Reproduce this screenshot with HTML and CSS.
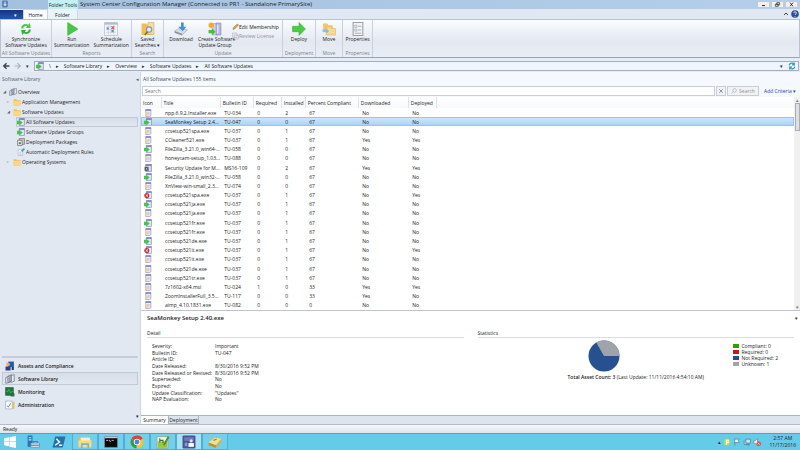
FILE: index.html
```html
<!DOCTYPE html>
<html lang="en">
<head>
    <meta charset="UTF-8">
    <meta name="viewport" content="width=device-width, initial-scale=1.0">
    <title>System Center Configuration Manager</title>
    <link rel="stylesheet" href="styles.css">
</head>
<body>
    <!-- Shared icons -->
    <svg class="sprite" aria-hidden="true">
        <symbol id="i-doc" viewBox="0 0 14 14"><path d="M3 1h9v11l-2 1H3z" fill="#f5f5ff" stroke="#7477b5"/><path d="M3 1h9v2H3z" fill="#6568a8"/><path d="M5 6h5M5 8h5M5 10h5" stroke="#a9aacc"/><rect x="2" y="6" width="5" height="5" fill="#f4cf94"/></symbol>
        <symbol id="i-green" viewBox="0 0 14 14"><path d="M4 1h9v12H4z" fill="#dfe6fa" stroke="#7477b5"/><path d="M4 1h9v2H4z" fill="#6568a8"/><path d="M0 5h4V3l6 5-6 5v-2H0z" fill="#45c44a"/></symbol>
        <symbol id="i-red" viewBox="0 0 14 14"><path d="M4 1h9v12H4z" fill="#f3f2ff" stroke="#7477b5"/><path d="M4 1h9v2H4z" fill="#6568a8"/><circle cx="5" cy="8" r="4.5" fill="#c82c38"/><path d="M3 6l4 4M7 6l-4 4" stroke="#fff" stroke-width="1.4"/></symbol>
        <symbol id="i-dark" viewBox="0 0 14 14"><path d="M3 1h10v12H3z" fill="#dddff0" stroke="#5c5f99"/><path d="M3 1h10v2H3z" fill="#6568a8"/><path d="M1 5h7v7H1z" fill="#4a4f66"/><path d="M3 7l3 3M6 7l-3 3" stroke="#fff"/></symbol>
        <symbol id="i-folder" viewBox="0 0 14 14"><path d="M1 2h5l1 2h6v9H1z" fill="#eebc54"/><path d="M1 5h12v8H1z" fill="#fbd77f"/></symbol>
        <symbol id="i-books" viewBox="0 0 14 14"><path d="M1 5l5-2v9l-5 1zM4 3l5-2v9l-5 2zM8 2l5-1v9l-5 2z" fill="#e8ebf2" stroke="#6a7080"/><path d="M3 7l3-1v5" stroke="#8b8fc1" fill="none"/></symbol>
        <symbol id="i-pkg" viewBox="0 0 14 14"><path d="M4 1h9v10H4z" fill="#ccc" stroke="#555"/><path d="M1 4h8v9H1z" fill="#eee" stroke="#444"/><circle cx="5" cy="9" r="2" fill="#557a55"/></symbol>
        <symbol id="i-rule" viewBox="0 0 14 14"><path d="M2 3h8v10H2z" fill="#fff" stroke="#9ab"/><path d="M4 7h4M4 9h4M4 11h4" stroke="#8ac"/><path d="M7 5l5-5 2 2-5 5z" fill="#3b9ad5"/></symbol>
    </svg>

    <header class="titlebar">
        <svg class="app-icon" viewBox="0 0 14 14"><rect x="2" y="1" width="10" height="12" rx="2" fill="#5b80b8"/><path d="M7 3v6M5 7l2 3 2-3" stroke="#fff" fill="none" stroke-width="1.5"/></svg>
        <span class="tools-label">Folder Tools</span>
        <h1>System Center Configuration Manager (Connected to PR1 - Standalone PrimarySite)</h1>
        <div class="window-buttons">
            <button aria-label="Minimize"><svg viewBox="0 0 12 7"><path d="M4 5h4" stroke="#222" stroke-width="1.4"/></svg></button>
            <button aria-label="Restore"><svg viewBox="0 0 12 7"><path d="M5 1h4v3H5zM3 3h4v3H3z" fill="#fff" stroke="#222"/></svg></button>
            <button aria-label="Close"><svg viewBox="0 0 12 7"><path d="M4 1l4 5M8 1L4 6" stroke="#222" stroke-width="1.3"/></svg></button>
        </div>
    </header>

    <div class="tabs">
        <button class="file-tab" aria-label="File">▾</button>
        <button class="tab active">Home</button>
        <button class="tab context">Folder</button>
        <div class="tabs-end">
            <svg viewBox="0 0 8 8"><path d="M2 5l2-2 2 2" fill="none" stroke="#444"/></svg>
            <svg viewBox="0 0 8 8"><circle cx="4" cy="4" r="3.8" fill="#2c4c9c"/><path d="M2.7 3c0-1.700 2.700-1.700 2.700 0 0 1-1.400 1-1.400 2M4 6v.8" stroke="#fff" fill="none" stroke-width=".8"/></svg>
        </div>
    </div>

    <div class="ribbon">
        <section class="group g-sync">
            <div class="tools">
                <button class="tool"><svg viewBox="0 0 26 26"><path d="M4 12C4 5 11 2 17 5l3-3 2 9-9 0 2-3c-3-2-7 0-7 4z" fill="#4cc94c"/><path d="M22 14c0 7-7 10-13 7l-3 3-2-9 9 0-2 3c3 2 7 0 7-4z" fill="#35b13a"/></svg>Synchronize<br>Software Updates</button>
            </div>
            <h2>All Software Updates</h2>
        </section>
        <section class="group g-reports">
            <div class="tools">
                <button class="tool"><svg viewBox="0 0 26 26"><path d="M5 1l19 12L5 25z" fill="#43c943" stroke="#2eaa32"/></svg>Run<br>Summarization</button>
                <button class="tool"><svg viewBox="0 0 26 26"><path d="M1 1h24v24H1z" fill="#f4f7fb" stroke="#9aa8bd"/><path d="M1 1h24v4H1z" fill="#b1bdd0"/><path d="M4 9h18M4 14h18M4 19h18M8 6v17M13 6v17M18 6v17" stroke="#b4c1d6"/><path d="M5 10h4v4H5zM14 15h4v4h-4z" fill="#5b8cd0"/><path d="M14 8l5 5m0-5l-5 5" stroke="#db5555" stroke-width="2"/></svg>Schedule<br>Summarization</button>
            </div>
            <h2>Reports</h2>
        </section>
        <section class="group g-search">
            <div class="tools">
                <button class="tool"><svg viewBox="0 0 26 26"><path d="M1 3h9l2 3h9v18H1z" fill="#f0be59"/><path d="M13 1h11v22H13z" fill="#f7dca3" stroke="#cf9e4d"/><circle cx="15" cy="14" r="5" fill="#dcecf8" stroke="#8296b1" stroke-width="2"/><path d="M12 18l-5 6" stroke="#8c6b3c" stroke-width="3"/></svg>Saved<br>Searches ▾</button>
            </div>
            <h2>Search</h2>
        </section>
        <section class="group g-update">
            <div class="tools">
                <button class="tool"><svg viewBox="0 0 26 26"><path d="M1 17l10-6 14 4-10 9z" fill="#d7dbe1" stroke="#8f97a4"/><path d="M1 17l14 5v3L1 20z" fill="#868f9b"/><path d="M13 1h5v8h5l-7 8-8-8h5z" fill="#3f91d7"/></svg>Download</button>
                <button class="tool"><svg viewBox="0 0 26 26"><path d="M9 3h9v21H9z" fill="#cfd3f3" stroke="#8d8cc5"/><path d="M15 2h9v22h-9z" fill="#b8b8e7" stroke="#7775b3"/><path d="M18 5v16" stroke="#f2f2ff" stroke-width="2"/><circle cx="6" cy="6" r="5" fill="#f6aa25"/><path d="M1 15h6v-4l7 7-7 7v-4H1z" fill="#48bd42"/></svg>Create Software<br>Update Group</button>
                <div class="small-tools">
                    <button><svg viewBox="0 0 14 14"><path d="M2 12l1-4 8-7 2 2-8 8z" fill="#e2ad4b" stroke="#745d39"/></svg>Edit Membership</button>
                    <button disabled><svg viewBox="0 0 14 14"><path d="M1 1h9v9H1zM5 5h8v8H5z" fill="#e5e8ee" stroke="#a7adb8"/></svg>Review License</button>
                </div>
            </div>
            <h2>Update</h2>
        </section>
        <section class="group g-deploy">
            <div class="tools">
                <button class="tool"><svg viewBox="0 0 26 26"><path d="M1 8h12V1l12 12-12 12v-7H1z" fill="#47cd3f" stroke="#2eab31"/></svg>Deploy</button>
            </div>
            <h2>Deployment</h2>
        </section>
        <section class="group g-move">
            <div class="tools">
                <button class="tool"><svg viewBox="0 0 26 26"><path d="M2 3h8l2 3h8v13H2z" fill="#f1c66d"/><path d="M8 9h8l2 3h7v12H8z" fill="#fbd98d" stroke="#dcae56"/><path d="M1 14h7v-3l5 6-5 5v-4H1z" fill="#8cbbe6"/></svg>Move</button>
            </div>
            <h2>Move</h2>
        </section>
        <section class="group g-props">
            <div class="tools">
                <button class="tool"><svg viewBox="0 0 26 26"><path d="M4 1h18v24H4z" fill="#f2f3f5" stroke="#9ca1aa" stroke-width="2"/><path d="M7 6h4v4H7zM7 13h4v4H7z" fill="none" stroke="#8e949f"/><path d="M13 8h6M13 15h6M7 21h12" stroke="#a7acb5" stroke-width="2"/></svg>Properties</button>
            </div>
            <h2>Properties</h2>
        </section>
    </div>

    <div class="address">
        <div class="history">
            <button aria-label="Back"><svg viewBox="0 0 14 14"><path d="M13 7H3m5-5L3 7l5 5" fill="none" stroke="#3e4654" stroke-width="2.500"/></svg></button>
            <button aria-label="Forward"><svg viewBox="0 0 14 14"><path d="M1 7h10M6 2l5 5-5 5" fill="none" stroke="#a9b1bf" stroke-width="2"/></svg></button>
            <span>▾</span>
        </div>
        <nav class="crumbs" aria-label="Breadcrumb">
            <svg><use href="#i-green"/></svg>
            <span>\</span><i>▸</i>
            <a href="#">Software Library</a><i>▸</i>
            <a href="#">Overview</a><i>▸</i>
            <a href="#">Software Updates</a><i>▸</i>
            <a href="#">All Software Updates</a>
            <span class="crumb-end">▾</span>
            <button aria-label="Refresh"><svg viewBox="0 0 14 14"><path d="M2 6c1-5 7-5 9-2V1m0 4H7M12 8c-1 5-7 5-9 2v3m0-4h4" fill="none" stroke="#2b93cf" stroke-width="2"/></svg></button>
        </nav>
    </div>

    <main class="workspace">
        <aside class="sidebar">
            <div class="side-head"><span>Software Library</span><span>◂</span></div>
            <ul class="tree">
                <li><a href="#" class="level-0"><i>◢</i><svg><use href="#i-books"/></svg>Overview</a></li>
                <li><a href="#" class="level-1"><i>▹</i><svg><use href="#i-folder"/></svg>Application Management</a></li>
                <li><a href="#" class="level-1"><i>◢</i><svg><use href="#i-folder"/></svg>Software Updates</a></li>
                <li><a href="#" class="level-2 selected"><svg><use href="#i-green"/></svg>All Software Updates</a></li>
                <li><a href="#" class="level-2"><svg><use href="#i-green"/></svg>Software Update Groups</a></li>
                <li><a href="#" class="level-2"><svg><use href="#i-pkg"/></svg>Deployment Packages</a></li>
                <li><a href="#" class="level-2"><svg><use href="#i-rule"/></svg>Automatic Deployment Rules</a></li>
                <li><a href="#" class="level-1"><i>▹</i><svg><use href="#i-folder"/></svg>Operating Systems</a></li>
            </ul>
            <nav class="wunderbar" aria-label="Workspaces">
                <a href="#"><svg viewBox="0 0 18 18"><path d="M2 2h11v9H2z" fill="#f0d7a1"/><path d="M6 1h10v10H6z" fill="#2557b5"/><circle cx="6" cy="6" r="3" fill="#e2a86c"/><path d="M1 10h9v7H1zM12 11h4v5h-4z" fill="#28407e"/></svg>Assets and Compliance</a>
                <a href="#" class="selected"><svg><use href="#i-books"/></svg>Software Library</a>
                <a href="#"><svg viewBox="0 0 18 18"><path d="M1 1h14v14H1z" fill="#1e7639" stroke="#17482a"/><path d="M2 8h3l2-4 3 7 2-3h2" fill="none" stroke="#54d465"/><path d="M10 11h7v6h-7z" fill="#35683e"/></svg>Monitoring</a>
                <a href="#"><svg viewBox="0 0 18 18"><path d="M1 2h12v14H1z" fill="#fff" stroke="#8395ac"/><path d="M4 10l2 3 4-7" fill="none" stroke="#466fa9" stroke-width="1.500"/><path d="M13 3h4v13h-4z" fill="#dec170"/></svg>Administration</a>
            </nav>
            <div class="side-more">▾</div>
        </aside>

        <div class="content">
            <h2 class="list-head">All Software Updates 155 items</h2>
            <form class="searchbar">
                <input type="text" placeholder="Search" aria-label="Search">
                <button type="button" aria-label="Clear" class="clear"><svg viewBox="0 0 10 10"><path d="M2 2l6 6M8 2L2 8" stroke="#8c8c8c" stroke-width="1.500"/></svg></button>
                <button type="submit" class="go"><svg viewBox="0 0 10 10"><circle cx="6" cy="4" r="3" fill="none" stroke="#aaa"/><path d="M4 6L1 9" stroke="#aaa"/></svg>Search</button>
                <a href="#">Add Criteria ▾</a>
            </form>
            <div class="list">
                <table>
                    <colgroup><col class="c-icon"><col class="c-title"><col class="c-bulletin"><col class="c-required"><col class="c-installed"><col class="c-percent"><col class="c-downloaded"><col class="c-deployed"><col></colgroup>
                    <thead>
                        <tr><th>Icon</th><th>Title</th><th>Bulletin ID</th><th>Required</th><th>Installed</th><th>Percent Compliant</th><th>Downloaded</th><th>Deployed</th><th></th></tr>
                    </thead>
                    <tbody>
                        <tr><td><svg><use href="#i-doc"/></svg></td><td>npp.6.9.2.Installer.exe</td><td>TU-034</td><td>0</td><td>2</td><td>67</td><td>No</td><td>No</td><td></td></tr>
                        <tr class="selected"><td><svg><use href="#i-green"/></svg></td><td>SeaMonkey Setup 2.4...</td><td>TU-047</td><td>0</td><td>0</td><td>67</td><td>No</td><td>No</td><td></td></tr>
                        <tr><td><svg><use href="#i-doc"/></svg></td><td>ccsetup521spa.exe</td><td>TU-037</td><td>0</td><td>1</td><td>67</td><td>No</td><td>No</td><td></td></tr>
                        <tr><td><svg><use href="#i-doc"/></svg></td><td>CCleaner521.exe</td><td>TU-037</td><td>0</td><td>1</td><td>67</td><td>Yes</td><td>Yes</td><td></td></tr>
                        <tr><td><svg><use href="#i-green"/></svg></td><td>FileZilla_3.21.0_win64-...</td><td>TU-058</td><td>0</td><td>0</td><td>67</td><td>No</td><td>No</td><td></td></tr>
                        <tr><td><svg><use href="#i-doc"/></svg></td><td>honeycam-setup_1.03...</td><td>TU-088</td><td>0</td><td>0</td><td>67</td><td>No</td><td>No</td><td></td></tr>
                        <tr><td><svg><use href="#i-dark"/></svg></td><td>Security Update for M...</td><td>MS16-109</td><td>0</td><td>2</td><td>67</td><td>Yes</td><td>Yes</td><td></td></tr>
                        <tr><td><svg><use href="#i-green"/></svg></td><td>FileZilla_3.21.0_win32-...</td><td>TU-058</td><td>0</td><td>0</td><td>67</td><td>No</td><td>No</td><td></td></tr>
                        <tr><td><svg><use href="#i-doc"/></svg></td><td>XnView-win-small_2.3...</td><td>TU-074</td><td>0</td><td>0</td><td>67</td><td>No</td><td>No</td><td></td></tr>
                        <tr><td><svg><use href="#i-red"/></svg></td><td>ccsetup521spa.exe</td><td>TU-037</td><td>0</td><td>1</td><td>67</td><td>No</td><td>Yes</td><td></td></tr>
                        <tr><td><svg><use href="#i-green"/></svg></td><td>ccsetup521ja.exe</td><td>TU-037</td><td>0</td><td>1</td><td>67</td><td>No</td><td>No</td><td></td></tr>
                        <tr><td><svg><use href="#i-doc"/></svg></td><td>ccsetup521ja.exe</td><td>TU-037</td><td>0</td><td>1</td><td>67</td><td>No</td><td>No</td><td></td></tr>
                        <tr><td><svg><use href="#i-green"/></svg></td><td>ccsetup521fr.exe</td><td>TU-037</td><td>0</td><td>1</td><td>67</td><td>No</td><td>No</td><td></td></tr>
                        <tr><td><svg><use href="#i-doc"/></svg></td><td>ccsetup521fr.exe</td><td>TU-037</td><td>0</td><td>1</td><td>67</td><td>No</td><td>No</td><td></td></tr>
                        <tr><td><svg><use href="#i-green"/></svg></td><td>ccsetup521de.exe</td><td>TU-037</td><td>0</td><td>1</td><td>67</td><td>No</td><td>No</td><td></td></tr>
                        <tr><td><svg><use href="#i-red"/></svg></td><td>ccsetup521it.exe</td><td>TU-037</td><td>0</td><td>1</td><td>67</td><td>No</td><td>Yes</td><td></td></tr>
                        <tr><td><svg><use href="#i-doc"/></svg></td><td>ccsetup521it.exe</td><td>TU-037</td><td>0</td><td>1</td><td>67</td><td>No</td><td>No</td><td></td></tr>
                        <tr><td><svg><use href="#i-doc"/></svg></td><td>ccsetup521de.exe</td><td>TU-037</td><td>0</td><td>1</td><td>67</td><td>No</td><td>No</td><td></td></tr>
                        <tr><td><svg><use href="#i-doc"/></svg></td><td>ccsetup521tr.exe</td><td>TU-037</td><td>0</td><td>1</td><td>67</td><td>No</td><td>No</td><td></td></tr>
                        <tr><td><svg><use href="#i-doc"/></svg></td><td>7z1602-x64.msi</td><td>TU-024</td><td>1</td><td>0</td><td>33</td><td>Yes</td><td>Yes</td><td></td></tr>
                        <tr><td><svg><use href="#i-doc"/></svg></td><td>ZoomInstallerFull_3.5...</td><td>TU-117</td><td>0</td><td>0</td><td>33</td><td>Yes</td><td>No</td><td></td></tr>
                        <tr><td><svg><use href="#i-doc"/></svg></td><td>aimp_4.10.1831.exe</td><td>TU-082</td><td>0</td><td>0</td><td>0</td><td>No</td><td>No</td><td></td></tr>
                    </tbody>
                </table>
                <div class="scrollbar"><span>▴</span><div class="thumb"></div><span class="down">▾</span></div>
            </div>

            <section class="detail">
                <div class="detail-head"><h2>SeaMonkey Setup 2.40.exe</h2><span>▾</span></div>
                <div class="panels">
                    <div class="panel">
                        <h3>Detail</h3>
                        <dl>
                            <dt>Severity:</dt><dd>Important</dd>
                            <dt>Bulletin ID:</dt><dd>TU-047</dd>
                            <dt>Article ID:</dt><dd></dd>
                            <dt>Date Released:</dt><dd>8/30/2016 9:52 PM</dd>
                            <dt>Date Released or Revised:</dt><dd>8/30/2016 9:52 PM</dd>
                            <dt>Superseded:</dt><dd>No</dd>
                            <dt>Expired:</dt><dd>No</dd>
                            <dt>Update Classification:</dt><dd>"Updates"</dd>
                            <dt>NAP Evaluation:</dt><dd>No</dd>
                        </dl>
                    </div>
                    <div class="panel">
                        <h3>Statistics</h3>
                        <div class="stats">
                            <figure>
                                <svg viewBox="0 0 32 32"><circle cx="16" cy="16" r="15.500" fill="#26508f"/><path d="M16 16L8.250 2.600A15.500 15.500 0 0 1 31.500 16z" fill="#9ea4aa"/></svg>
                                <figcaption><b>Total Asset Count: 3</b> (Last Update: 11/11/2016 4:54:10 AM)</figcaption>
                            </figure>
                            <ul class="legend">
                                <li class="compliant">Compliant: 0</li>
                                <li class="required">Required: 0</li>
                                <li class="not-required">Not Required: 2</li>
                                <li class="unknown">Unknown: 1</li>
                            </ul>
                        </div>
                    </div>
                </div>
                <div class="detail-tabs">
                    <button class="active">Summary</button>
                    <button>Deployment</button>
                </div>
            </section>
        </div>
    </main>

    <div class="status">Ready</div>

    <footer class="taskbar">
        <button class="start" aria-label="Start"><svg viewBox="0 0 26 26"><path d="M2 6l9-2v8H2zM12 4l12-2v10H12zM2 13h9v8l-9-2zM12 13h12v11l-12-2z" fill="#fff"/></svg></button>
        <button aria-label="Server Manager"><svg viewBox="0 0 26 26"><path d="M3 1h9v21H3z" fill="#2875b6"/><path d="M5 5h5M5 9h5" stroke="#bfe2f7" stroke-width="2"/><path d="M9 15h16v8H9z" fill="#d6e3ec" stroke="#5a7c99"/><path d="M13 15v-3h8v3M9 19h16" fill="none" stroke="#5a7c99" stroke-width="2"/></svg></button>
        <button aria-label="PowerShell"><svg viewBox="0 0 26 26"><path d="M6 3h19l-5 20H1z" fill="#2370b0"/><path d="M8 7l6 6-8 6M13 19h6" fill="none" stroke="#fff" stroke-width="2.500"/></svg></button>
        <button class="open" aria-label="File Explorer"><svg viewBox="0 0 26 26"><path d="M1 4h8l2 3h13v16H1z" fill="#e6b951"/><path d="M5 5h17v9H5z" fill="#fff4cf"/><path d="M1 10h24v13H1z" fill="#fadc82"/><path d="M7 25v-8h12v8" fill="none" stroke="#74b6d4" stroke-width="3"/></svg></button>
        <button class="open" aria-label="Command Prompt"><svg viewBox="0 0 26 26"><path d="M1 3h24v20H1z" fill="#0b0b0b" stroke="#8c9296"/><path d="M1 3h24v3H1z" fill="#c5cbcf"/><path d="M4 10h4M10 9l2 4M14 10h4" stroke="#e8e8e8" stroke-width="1.500"/></svg></button>
        <button class="open" aria-label="Chrome"><svg viewBox="0 0 26 26"><circle cx="13" cy="13" r="12" fill="#f3c724"/><path d="M13 13L2.600 7A12 12 0 0 1 23.400 7z" fill="#dc4437"/><path d="M13 1a12 12 0 0 1 10.400 6H13z" fill="#dc4437"/><path d="M13 13L2.600 7A12 12 0 0 0 12 25z" fill="#2f9e54"/><circle cx="13" cy="13" r="6" fill="#fff"/><circle cx="13" cy="13" r="4.500" fill="#4584e9"/></svg></button>
        <button class="open" aria-label="Notepad++"><svg viewBox="0 0 26 26"><path d="M2 3h20v22H2z" fill="#f0f5e8" stroke="#799454"/><path d="M3 12h18v12H3z" fill="#96c93e"/><path d="M7 6v8M7 10h6v5" stroke="#456d31" stroke-width="2" fill="none"/><path d="M13 18L22 2l3 2-9 16z" fill="#548c37"/></svg></button>
        <button class="open current" aria-label="Configuration Manager"><svg viewBox="0 0 26 26"><rect x="1" y="1" width="24" height="24" rx="2" fill="#445594"/><path d="M4 4h18v7H4z" fill="#6c7ab6"/><path d="M5 14h5v7H5z" fill="#8c98c9"/><path d="M12 15h10v7H12z" fill="#fff"/><circle cx="17" cy="11" r="3" fill="#dce3fa"/></svg></button>
        <button class="open" aria-label="Package tool"><svg viewBox="0 0 26 26"><path d="M1 14L12 5l13 2-10 12z" fill="#f6df8b"/><path d="M1 14l14 5v5L1 19z" fill="#bd9434"/><path d="M15 19L25 7v5L15 24z" fill="#dcae47"/><path d="M10 10l6-2" stroke="#a27b2a" stroke-width="2"/></svg></button>
        <div class="tray">
            <span>▴</span>
            <svg viewBox="0 0 14 14"><circle cx="7" cy="7" r="6" fill="#bbd74b"/><path d="M6 12V4h3v4H6" fill="none" stroke="#fff" stroke-width="2"/></svg>
            <svg viewBox="0 0 14 14"><path d="M3 13V1M3 2h8L9 5l2 3H3" fill="#e9f7fc" stroke="#47717f"/></svg>
            <svg viewBox="0 0 14 14"><path d="M5 2h8v7H5zM2 4v7h5M9 9v3M6 12h6" fill="#c4e6f2" stroke="#41616e"/></svg>
            <svg viewBox="0 0 14 14"><path d="M1 5h3l4-4v12L4 9H1z" fill="#f7fafb" stroke="#58717a"/><circle cx="10" cy="10" r="4" fill="#dd4245"/><path d="M8 8l4 4M12 8l-4 4" stroke="#fff"/></svg>
            <time>2:57 AM<br>11/17/2016</time>
        </div>
    </footer>
</body>
</html>
```
FILE: styles.css
```css
* {
    box-sizing: border-box;
}
body {
    margin: 0;
    height: 100vh;
    display: flex;
    flex-direction: column;
    overflow: hidden;
    font-family: "Open Sans", "Noto Sans", sans-serif;
    font-size: 5px;
    line-height: 6px;
    color: #222;
    background-color: #e6ebf4;
}
h1, h2, h3, ul, dl, dd, figure {
    margin: 0;
    padding: 0;
    font-size: inherit;
    font-weight: normal;
    list-style: none;
}
button, input {
    font: inherit;
    color: inherit;
    margin: 0;
    padding: 0;
    border: none;
    background: none;
}
a {
    color: inherit;
    text-decoration: none;
}
i {
    font-style: normal;
}
svg {
    display: block;
    width: 8px;
    height: 8px;
    flex: none;
}
.sprite {
    position: absolute;
    width: 0;
    height: 0;
}

/* Title bar */
.titlebar {
    display: flex;
    align-items: stretch;
    height: 9px;
    background: linear-gradient(90deg, #a3c0de, #b5cfe9);
}
.app-icon {
    margin-left: 1px;
}
.tools-label {
    width: 30px;
    margin-left: 39px;
    line-height: 10px;
    text-align: center;
    background-color: #c4f0f5;
}
.titlebar h1 {
    flex: 1;
    padding-left: 2px;
    font-size: 6px;
    line-height: 8px;
    white-space: nowrap;
}
.window-buttons {
    display: flex;
    gap: 1px;
    padding: 1px 2px 0 0;
}
.window-buttons button {
    width: 13px;
    height: 7px;
    background-color: #f0f0f0;
    border: 1px solid #c3cad3;
}
.window-buttons svg {
    width: 11px;
    height: 5px;
}

/* Ribbon */
.tabs {
    display: flex;
    height: 10px;
    background-color: #e1e8f3;
}
.tabs button {
    line-height: 10px;
}
.file-tab {
    width: 23px;
    margin-top: 1px;
    padding-left: 8px;
    color: #fff;
    background: linear-gradient(#15377f, #2257b0);
}
.tab {
    width: 25px;
}
.tab.active {
    background-color: #fafcff;
    border: 1px solid #c9d3e1;
    border-bottom: none;
}
.tab.context {
    width: 30px;
    padding-top: 1px;
    background-color: #e8f4f8;
    border-right: 1px solid #c8dbe4;
}
.tabs-end {
    display: flex;
    align-items: center;
    gap: 1px;
    margin-left: auto;
    padding-right: 1px;
}
.ribbon {
    display: flex;
    height: 39px;
    background: linear-gradient(#fafcfe, #e3e8f1 60%, #e9eef6);
    border: 1px solid #b9c2cf;
    border-bottom-color: #9aa3b1;
}
.group {
    display: flex;
    flex-direction: column;
    border-right: 1px solid #c9d0dc;
}
.group h2 {
    text-align: center;
    color: #7b818b;
    line-height: 7px;
    white-space: nowrap;
}
.g-sync { width: 51px; }
.g-reports { width: 80px; }
.g-search { width: 32px; }
.g-update { width: 119px; }
.g-deploy { width: 33px; }
.g-move { width: 27px; }
.g-props { width: 30px; }
.tools {
    flex: 1;
    display: flex;
    justify-content: center;
    align-items: flex-start;
    padding-top: 2px;
}
.tool {
    display: block;
    flex: 1;
    line-height: 6px;
    text-align: center;
    white-space: nowrap;
}
.tool svg {
    width: 14px;
    height: 14px;
    margin: 0 auto;
}
.g-update .tool {
    flex: none;
    width: 34px;
}
.small-tools {
    flex: 1;
}
.small-tools button {
    display: flex;
    align-items: center;
    height: 9px;
    white-space: nowrap;
}
.small-tools button:disabled {
    color: #8d929b;
}
.small-tools svg {
    width: 7px;
}

/* Breadcrumb */
.address {
    display: flex;
    height: 14px;
    padding: 3px 1px 1px 2px;
    background-color: #e6ecf5;
}
.history {
    display: flex;
    align-items: center;
    gap: 4px;
    width: 32px;
}
.crumbs {
    flex: 1;
    display: flex;
    align-items: center;
    gap: 5px;
    padding: 0 2px 0 1px;
    background-color: #eff5fc;
    border: 1px solid #a3adbb;
}
.crumb-end {
    margin-left: auto;
}

/* Left side */
.workspace {
    flex: 1;
    display: flex;
    min-height: 0;
}
.sidebar {
    width: 141px;
    display: flex;
    flex-direction: column;
    background-color: #e2e8f1;
    border-right: 1px solid #cfd7e3;
}
.side-head {
    display: flex;
    justify-content: space-between;
    padding: 0 1px 0 2px;
    line-height: 14px;
    color: #545c69;
}
.tree {
    padding: 1px 2px 0;
    flex: 1;
}
.tree a {
    display: flex;
    align-items: center;
    gap: 1px;
    height: 10px;
    border: 1px solid transparent;
    white-space: nowrap;
}
.tree i {
    width: 5px;
    font-size: 4px;
    color: #666;
}
.level-0 { margin-left: 0; }
.level-1 { margin-left: 4px; }
.level-2 { margin-left: 14px; }
.tree a.selected,
.wunderbar a.selected {
    background: linear-gradient(#d7dee9, #e2e7ef);
    border-color: #c1c9d5;
}
.wunderbar {
    margin: 0 2px;
    padding-top: 1px;
    border-top: 2px solid #c4ccd8;
}
.wunderbar a {
    display: flex;
    align-items: center;
    gap: 3px;
    height: 13px;
    padding-left: 2px;
    font-weight: 600;
    border: 1px solid transparent;
}
.wunderbar svg {
    width: 10px;
    height: 10px;
}
.side-more {
    padding: 2px 1px 0;
    height: 13px;
    text-align: right;
}

/* Update list */
.content {
    flex: 1;
    min-width: 0;
    display: flex;
    flex-direction: column;
    background-color: #f5f9fe;
}
.list-head {
    padding-left: 2px;
    line-height: 14px;
    color: #414855;
}
.searchbar {
    display: flex;
    gap: 1px;
    height: 10px;
    padding: 0 4px 0 1px;
    line-height: 8px;
}
.searchbar input {
    flex: 1;
    padding: 0 2px;
    border: 1px solid #c8ced7;
    background-color: #fff;
}
.searchbar input::placeholder {
    color: #777;
}
.searchbar button {
    display: flex;
    align-items: center;
    justify-content: center;
    gap: 2px;
    border: 1px solid #c8ced7;
    background-color: #f0f2f5;
    color: #929292;
}
.searchbar .clear {
    width: 10px;
}
.searchbar .go {
    width: 32px;
}
.searchbar svg {
    width: 6px;
}
.searchbar a {
    width: 36px;
    padding-left: 4px;
    line-height: 10px;
    color: #1d3f9f;
    white-space: nowrap;
}
.list {
    flex: 1;
    min-height: 0;
    display: flex;
    margin-top: 1px;
    background-color: #fff;
}
table {
    flex: 1;
    height: 100%;
    table-layout: fixed;
    border-collapse: collapse;
}
.c-icon { width: 20px; }
.c-title { width: 59px; }
.c-bulletin { width: 33px; }
.c-required { width: 28px; }
.c-installed { width: 24px; }
.c-percent { width: 53px; }
.c-downloaded { width: 50px; }
.c-deployed { width: 28px; }
th {
    height: 11px;
    padding: 1px 0 0 2px;
    font-weight: normal;
    text-align: left;
    white-space: nowrap;
    border-right: 1px solid #dfe3e8;
    background: linear-gradient(#fff, #f6f8fa);
}
th:last-child {
    border: none;
}
td {
    padding: 0 0 0 4px;
    line-height: 6px;
    white-space: nowrap;
    overflow: hidden;
}
tr.selected {
    background: linear-gradient(#d3e7fb, #a9d0f7);
    outline: 1px solid #9cc4ea;
    outline-offset: -1px;
}
td:first-child {
    padding-left: 3px;
}
.scrollbar {
    width: 6px;
    display: flex;
    flex-direction: column;
    align-items: center;
    background-color: #f0f0f0;
    color: #777;
}
.thumb {
    width: 5px;
    height: 28px;
    border: 1px solid #a9aeb5;
    background-color: #dcdfe3;
}
.down {
    margin-top: auto;
}

/* Details */
.detail {
    height: 114px;
    display: flex;
    flex-direction: column;
    background-color: #fff;
    border-top: 1px solid #bcc4cf;
}
.detail-head {
    display: flex;
    justify-content: space-between;
    padding: 0 2px 0 6px;
    line-height: 14px;
}
.detail-head h2 {
    font-size: 6px;
    font-weight: 600;
}
.panels {
    flex: 1;
    display: grid;
    grid-template-columns: 1fr 1fr;
    gap: 14px;
    padding: 5px 6px 0;
}
.panel h3 {
    line-height: 7px;
    border-bottom: 1px solid #d9dde2;
}
dl {
    display: grid;
    grid-template-columns: 63px 1fr;
    grid-template-rows: repeat(9, 1fr);
    height: 60px;
    margin: 5px 0 0 5px;
    white-space: nowrap;
}
.stats {
    display: grid;
    grid-template-columns: 1fr auto 1fr;
    padding-top: 2px;
}
figure {
    grid-column: 2;
}
figure svg {
    width: 32px;
    height: 32px;
    margin-left: 20px;
}
figcaption {
    margin-top: 2px;
    white-space: nowrap;
}
figcaption b {
    font-weight: 600;
}
.legend {
    justify-self: end;
    padding: 3px 16px 0 0;
    white-space: nowrap;
}
.legend li::before {
    content: "";
    display: inline-block;
    width: 6px;
    height: 4px;
    margin-right: 2px;
    background-color: #a3a6a9;
}
.legend .compliant::before { background-color: #24a50e; }
.legend .required::before { background-color: #bd1a1a; }
.legend .not-required::before { background-color: #26508f; }
.detail-tabs {
    display: flex;
    height: 9px;
    background-color: #dce5ee;
    border-top: 1px solid #a9b4c1;
}
.detail-tabs button {
    width: 31px;
    line-height: 8px;
    border: 1px solid #a9b4c1;
    border-top: none;
}
.detail-tabs button.active {
    width: 27px;
    background-color: #fff;
    border: none;
}

/* Bottom bars */
.status {
    height: 9px;
    padding-left: 3px;
    line-height: 8px;
    background: linear-gradient(#f5f7fa, #dfe4ec);
    border-top: 1px solid #b4bcc8;
}
.taskbar {
    display: flex;
    height: 17px;
    background-color: #65cbe8;
    border-top: 1px solid #4da5c4;
}
.taskbar button {
    display: flex;
    align-items: center;
    justify-content: center;
    width: 26px;
    border: 1px solid transparent;
    border-top: none;
}
.taskbar .start {
    width: 20px;
}
.taskbar button svg {
    width: 14px;
    height: 14px;
}
.taskbar .open {
    background-color: #74d0ea;
    border-color: #4eb0ce;
}
.taskbar .current {
    background-color: #a9e3f3;
}
.tray {
    display: flex;
    align-items: center;
    gap: 2px;
    margin-left: auto;
    padding-right: 4px;
}
.tray time {
    margin-left: 6px;
    line-height: 7px;
    text-align: center;
}
```
